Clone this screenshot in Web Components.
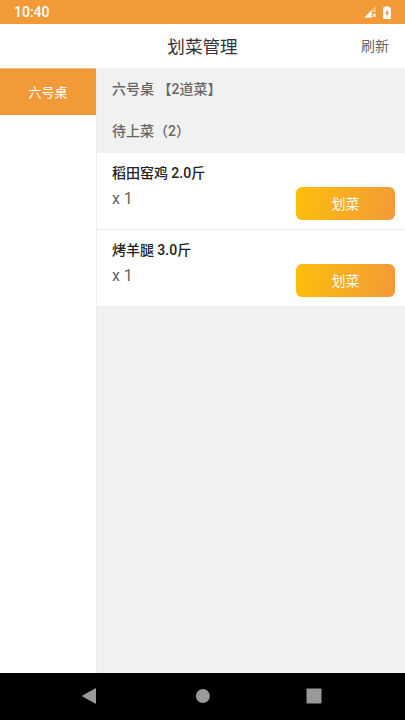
<!DOCTYPE html>
<html lang="zh-CN">
<head>
<meta charset="utf-8">
<title>划菜管理</title>
<style>
html,body{margin:0;height:100%}
body{font-family:Roboto,"Noto Sans CJK SC",sans-serif;overflow:hidden}
</style>
</head>
<body>
<serve-app></serve-app>
<script>
const define=(name,html)=>customElements.define(name,class extends HTMLElement{
  constructor(){super();this.attachShadow({mode:'open'}).innerHTML=html}
});
define('status-bar',`<style>
:host{display:flex;height:23.5px;background:#f39a38;color:#fff;align-items:center;justify-content:space-between;box-sizing:border-box;padding:1px 14px 0 14px;font-size:14px;font-weight:500}
div{display:flex;gap:6px;align-items:center}svg{display:block}
</style><span>10:40</span><div>
<svg width="13" height="12" viewBox="0 0 13 12"><path d="M12 0v6H8v5.5H.3z" fill="#fff" opacity=".4"/><path d="M7.5 4.3v7.2H.3z" fill="#fff"/><path d="M8.9 7.9l3 3M11.9 7.9l-3 3" stroke="#fff" stroke-width="1.1"/></svg>
<svg width="8" height="13" viewBox="0 0 8 13"><path d="M2.4 0h3.2v1.3H7.2q.7 0 .7.7v10.2q0 .7-.7.7H.8q-.7 0-.7-.7V2q0-.7.7-.7h1.6z" fill="#fff"/><path d="M4.8 3.3 1.9 7.4h1.7v3.4l2.7-4.4H4.6z" fill="#f39a38"/></svg></div>`);
define('title-bar',`<style>
:host{display:grid;grid-template-columns:1fr auto 1fr;align-items:center;height:44.5px;background:#fff;padding:0 16px 1px 16px;box-sizing:border-box;color:#333;font-size:17.6px}
.action{justify-self:end;font-size:14px;color:#666}
</style><span></span><slot></slot><span class="action"><slot name="action"></slot></span>`);
define('table-tab',`<style>
:host{display:flex;height:47px;align-items:center;justify-content:center;background:#f39a38;color:#fff;font-size:13px;box-sizing:border-box;border-top:1px solid #f6bd80;padding-bottom:1px}
</style><slot></slot>`);
define('group-label',`<style>
:host{display:flex;height:42.25px;align-items:center;padding:0 15.5px 2.5px;color:#666;font-size:14px;font-weight:500;box-sizing:border-box}
</style><slot></slot>`);
define('serve-button',`<style>
:host{display:block}
button{display:flex;align-items:center;justify-content:center;width:99px;height:33px;padding:0 0 1px;border:0;border-radius:6px;background:linear-gradient(100deg,#fcbf0c,#f39a38);color:#fff;font:14px Roboto,"Noto Sans CJK SC",sans-serif}
</style><button><slot></slot></button>`);
define('dish-row',`<style>
:host{display:flex;justify-content:space-between;align-items:flex-start;height:77px;background:#fff;border-bottom:1px solid #ececec;box-sizing:border-box;padding:10px 10px 0 15.4px}
.name{font-size:14px;line-height:20px;font-weight:500;color:#222}
.qty{font-size:16px;line-height:20px;color:#666;margin-top:6px}
serve-button{margin-top:24px}
</style><div><div class="name"><slot></slot></div><div class="qty"><slot name="qty"></slot></div></div><serve-button>划菜</serve-button>`);
define('nav-bar',`<style>
:host{display:flex;height:47.5px;background:#000;box-sizing:border-box;padding:0 83px 0 81px;justify-content:space-between;align-items:center}
svg{display:block}
</style>
<svg width="16" height="18" viewBox="0 0 16 18"><path d="M14.5 1.7v14.6L1.5 9z" fill="#999" stroke="#999" stroke-linejoin="round"/></svg>
<svg width="16" height="16" viewBox="0 0 16 16"><circle cx="8.9" cy="8" r="7" fill="#999"/></svg>
<svg width="16" height="16" viewBox="0 0 16 16"><rect x=".5" y=".5" width="15" height="15" rx=".7" fill="#999"/></svg>`);
define('serve-app',`<style>
:host{display:flex;flex-direction:column;height:100vh;background:#f1f1f1}
main{display:flex;flex:1;min-height:0}
aside{width:96.5px;background:#fff;border-right:1px solid #eee;box-sizing:border-box}
section{flex:1}
table-tab{margin-right:-.5px}
</style><status-bar></status-bar><title-bar>划菜管理<span slot="action">刷新</span></title-bar>
<main><aside><table-tab>六号桌</table-tab></aside><section>
<group-label>六号桌 【2道菜】</group-label><group-label>待上菜（2）</group-label>
<dish-row>稻田窑鸡 2.0斤<span slot="qty">x 1</span></dish-row>
<dish-row>烤羊腿 3.0斤<span slot="qty">x 1</span></dish-row>
</section></main><nav-bar></nav-bar>`);
</script>
</body>
</html>
